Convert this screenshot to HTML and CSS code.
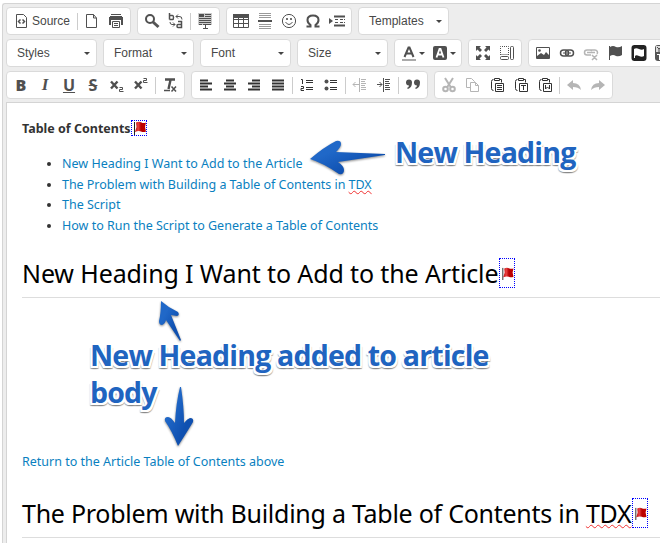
FILE: index.html
```html
<!DOCTYPE html>
<html lang="en">
<head>
<meta charset="utf-8">
<title>Article editor</title>
<link rel="stylesheet" href="styles.css">
</head>
<body>
<svg class="defs" aria-hidden="true">
  <defs>
    <linearGradient id="blue" x1="0" y1="0" x2="1" y2="1"><stop offset="0.3" stop-color="#2068c8"/><stop offset="0.7" stop-color="#0f50b0"/></linearGradient>
    <linearGradient id="red" x1="0" y1="0" x2="1" y2="0"><stop offset="0" stop-color="#c01010"/><stop offset="0.3" stop-color="#e84040"/><stop offset="0.55" stop-color="#b80000"/><stop offset="1" stop-color="#c00000"/></linearGradient>
    <symbol id="flag" viewBox="0 0 14 14"><path d="M2.500 1v13" stroke="#222" fill="none"/><path d="M4 1.500q3-1.500 5.500 0 2 1 4.500 0l-1 4.500 1 4.500q-2.500 1.200-5 0-2.500-1-6 .5l1.500-5z" fill="url(#red)"/></symbol>
  </defs>
</svg>
<div class="editor">
  <div class="toolbar">
    <div class="row">
      <div class="group">
        <span class="btn source"><svg class="ic" viewBox="0 0 16 16"><path d="M3.500 1.500h7l3 3v10h-10z" class="s"/><path d="M7.500 6.500L5.500 8.500l2 2M9.500 6.500l2 2-2 2" class="s w"/></svg>Source</span><i class="sep"></i>
        <span class="btn"><svg class="ic" viewBox="0 0 16 16"><path d="M2.500 1.500h7l3 3.500v9.500h-10zM9.500 1.500v3.500h3" class="s"/></svg></span>
        <span class="btn"><svg class="ic" viewBox="0 0 16 16"><path d="M3 1h10v1H3zM2 3h12v1h1v8h-2V7H3v5H1V4h1z" class="f"/><path d="M4.500 8.500h7v6h-7zM6 10.500h4M6 12.500h4" class="s"/></svg></span>
      </div>
      <div class="group">
        <span class="btn"><svg class="ic" viewBox="0 0 16 16"><circle cx="6" cy="6" r="4" class="s b"/><path d="M9 9l5.500 5" stroke="#555" stroke-width="3"/></svg></span>
        <span class="btn"><svg class="ic" viewBox="0 0 16 16"><path d="M1.500 0v6.500M1.500 2.500h3q1 0 1 2t-1 2h-3M10 8.500h3.500v6h-3.500q-1 0-1-1.500t1-1.500h3.500" class="s w"/><path d="M8 3.500h3q3-.5 3 3M8 3.500l2-2M8 3.500l2 2M2 9q0 2.500 2 2.500h3l-2-2M7 11.500l-2 2" class="s"/></svg></span><i class="sep"></i>
        <span class="btn"><svg class="ic" viewBox="0 0 16 16"><path d="M1 0h14v12H1z" fill="#ccc"/><path d="M2 1.500h5M2 3.500h5M8 1.500h6M8 3.500h6M2 5.500h12M2 7.500h12M2 9.500h12M2 11.500h3M11 11.500h3" class="s"/><path d="M2 1h5v3H2z" class="f"/><path d="M6 11.500h5M8.500 11.500v4M6 15.500h5" class="s"/></svg></span>
      </div>
      <div class="group">
        <span class="btn"><svg class="ic" viewBox="0 0 16 16"><path d="M.5 1.500h15v13H.5zM.5 6.500h15M.5 10.500h15M5.500 4v10M10.500 4v10" class="s"/><path d="M0 1h16v4H0z" class="f"/></svg></span>
        <span class="btn"><svg class="ic" viewBox="0 0 16 16"><path d="M2 .5h12M2 2.500h12M2 4.500h12M2 11.500h12M2 13.500h12M2 15.500h12" stroke="#999"/><path d="M1 7h14v2H1z" class="f"/></svg></span>
        <span class="btn"><svg class="ic" viewBox="0 0 16 16"><circle cx="8" cy="8" r="6.600" class="s"/><path d="M4.500 9q3.500 5 7 0" class="s"/><circle cx="6" cy="6" r="1.100" class="f"/><circle cx="10" cy="6" r="1.100" class="f"/></svg></span>
        <span class="btn"><svg class="ic" viewBox="0 0 16 16"><path d="M1.500 13.500h4v-1.500Q2.500 10 2.500 7Q2.500 2.500 8 2.500T13.500 7q0 3-3 5v1.500h4" class="s b"/></svg></span>
        <span class="btn"><svg class="ic" viewBox="0 0 16 16"><path d="M0 5l4 3-4 3z" class="f"/><path d="M5 3.500h11M5 12.500h11" class="s b"/><path d="M6 6.500h3m2 0h3m1 0h1M6 9.500h3m2 0h3m1 0h1" class="s"/></svg></span>
      </div>
      <div class="group"><span class="combo">Templates<i class="caret"></i></span></div>
    </div>
    <div class="row">
      <div class="group"><span class="combo">Styles<i class="caret"></i></span></div>
      <div class="group"><span class="combo">Format<i class="caret"></i></span></div>
      <div class="group"><span class="combo">Font<i class="caret"></i></span></div>
      <div class="group"><span class="combo">Size<i class="caret"></i></span></div>
      <div class="group">
        <span class="btn color"><svg class="ic" viewBox="0 0 16 16"><path d="M3.500 12L7.500 2.500h1L12.500 12M5 8.500h6" class="s b"/><path d="M1 14h14v2H1z" fill="#aaa"/></svg><i class="caret"></i></span>
        <span class="btn color"><svg class="ic" viewBox="0 0 16 16"><rect x="1" y="1" width="14" height="14" rx="2" class="f"/><path d="M4.500 12.500L7.500 4h1l3 8.500M6 9.500h4" stroke="#fff" stroke-width="1.800" fill="none"/></svg><i class="caret"></i></span>
      </div>
      <div class="group">
        <span class="btn"><svg class="ic" viewBox="0 0 16 16"><path d="M1 1h5L4.500 2.500l2.500 2.500-2 2-2.500-2.500L1 6zM15 1v5l-1.500-1.500L11 7 9 5l2.500-2.500L10 1zM1 15v-5l1.500 1.500L5 9l2 2-2.500 2.500L6 15zM15 15h-5l1.500-1.500L9 11l2-2 2.500 2.500L15 10z" class="f"/></svg></span>
        <span class="btn"><svg class="ic" viewBox="0 0 16 16"><path d="M1.500 10V1.500h8V11M1.500 9.500h8" class="s" stroke-dasharray="1 1"/><rect x="11.500" y="1.500" width="3" height="13" rx="1" class="s"/><rect x="1.500" y="11.500" width="8" height="3" rx="1" class="s"/></svg></span>
      </div>
      <div class="group long">
        <span class="btn"><svg class="ic" viewBox="0 0 16 16"><path d="M1.500 2.500h13v11h-13z" class="s"/><path d="M2 11l4-3 3 2 2-3 3 3v3H2z" class="f"/><circle cx="4.500" cy="5.500" r="1.300" class="f"/></svg></span>
        <span class="btn"><svg class="ic" viewBox="0 0 16 16"><rect x="1.500" y="5" width="8" height="6" rx="3" class="s w"/><rect x="6.500" y="5" width="8" height="6" rx="3" class="s w"/><path d="M4 8h8" class="s"/></svg></span>
        <span class="btn dim"><svg class="ic" viewBox="0 0 16 16"><path d="M8 10H4a2.500 2.500 0 010-5h3a2.500 2.500 0 012 1M7 5h5a2.500 2.500 0 012 4M4 7.500h8M9 10l5 5M14 10l-5 5" class="s w"/></svg></span>
        <span class="btn"><svg class="ic" viewBox="0 0 16 16"><path d="M2.500 1v14" class="s"/><path d="M3 2q3-2 6 0 3 1 6-1v9q-3 2-6 1-3-2-6 0z" class="f"/></svg></span>
        <span class="btn"><svg class="ic" viewBox="0 0 16 16"><rect x=".5" y="0" width="15" height="16" rx="3" fill="#222"/><path d="M3 13V4q2-1.500 5 0t5 0v7q-2 1.500-5 0t-4 0v2z" fill="#fff"/></svg></span>
        <span class="btn"><svg class="ic" viewBox="0 0 16 16"><rect x="0" y="0" width="16" height="16" rx="3" fill="#555"/><path d="M1 1h14v6H1z" fill="#ddd"/><path d="M2 2l2 2v3M6 2L4 4" class="s"/><path d="M2 9.500h5M4.500 10v5" stroke="#fff"/></svg></span>
      </div>
    </div>
    <div class="row">
      <div class="group">
        <span class="btn ch"><b>B</b></span><span class="btn ch serif"><b><em>I</em></b></span><span class="btn ch"><u>U</u></span><span class="btn ch"><s>S</s></span>
        <span class="btn"><svg class="ic" viewBox="0 0 16 16"><path d="M2 4.500l6.500 7M8.500 4.500l-6.500 7" class="s x"/><path d="M10.500 10.500h3v2h-3v2h4" class="s"/></svg></span>
        <span class="btn"><svg class="ic" viewBox="0 0 16 16"><path d="M2 4.500l6.500 7M8.500 4.500l-6.500 7" class="s x"/><path d="M10.500 1.500h3v2h-3v2h4" class="s"/></svg></span><i class="sep"></i>
        <span class="btn"><svg class="ic" viewBox="0 0 16 16"><path d="M3 2.500h10M8.500 3L6.500 12" class="s x"/><path d="M2 13.500h6M9.500 9.500l4.500 5M14 9.500l-4.500 5" class="s w"/></svg></span>
      </div>
      <div class="group">
        <span class="btn"><svg class="ic" viewBox="0 0 16 16"><path d="M2 3.500h8M2 6.500h12M2 9.500h8M2 12.500h12" class="d b"/></svg></span>
        <span class="btn"><svg class="ic" viewBox="0 0 16 16"><path d="M4 3.500h8M2 6.500h12M4 9.500h8M2 12.500h12" class="d b"/></svg></span>
        <span class="btn"><svg class="ic" viewBox="0 0 16 16"><path d="M6 3.500h8M2 6.500h12M6 9.500h8M2 12.500h12" class="d b"/></svg></span>
        <span class="btn"><svg class="ic" viewBox="0 0 16 16"><path d="M2 3.500h12M2 6.500h12M2 9.500h12M2 12.500h12" class="d b"/></svg></span><i class="sep"></i>
        <span class="btn"><svg class="ic" viewBox="0 0 16 16"><path d="M2 2.500h1.500V7M2 9.500h2.500v2H2v2h3M7 3.500h7M7 5.500h7M7 10.500h7M7 12.500h7" class="d"/></svg></span>
        <span class="btn"><svg class="ic" viewBox="0 0 16 16"><circle cx="3.500" cy="4.500" r="2" class="f"/><circle cx="3.500" cy="11.500" r="2" class="f"/><path d="M7 3.500h7M7 5.500h7M7 10.500h7M7 12.500h7" class="d"/></svg></span><i class="sep"></i>
        <span class="btn dim"><svg class="ic" viewBox="0 0 16 16"><path d="M7.500 1v14M9 2.500h5M9 4.500h4M9 6.500h5M9 8.500h4M9 10.500h5M9 12.500h5M1 7.500h6M3.500 5L1 7.500 3.500 10" class="s"/></svg></span>
        <span class="btn"><svg class="ic" viewBox="0 0 16 16"><path d="M7.500 1v14M9 2.500h5M9 4.500h4M9 6.500h5M9 8.500h4M9 10.500h5M9 12.500h5M1 7.500h5M3.500 5L6 7.500 3.500 10" class="s"/></svg></span><i class="sep"></i>
        <span class="btn"><svg class="ic" viewBox="0 0 16 16"><path d="M1 5.500a3 3 0 116 0q0 5-4 6.500l-1-1q2-1 2-2.500Q1 8.500 1 5.500zM9 5.500a3 3 0 116 0q0 5-4 6.500l-1-1q2-1 2-2.500Q9 8.500 9 5.500z" class="f"/></svg></span>
      </div>
      <div class="group">
        <span class="btn dim"><svg class="ic" viewBox="0 0 16 16"><path d="M4 1l6 9.500M12 1l-6 9.500" class="s b"/><circle cx="4.500" cy="12" r="2.300" class="s b"/><circle cx="11.500" cy="12" r="2.300" class="s b"/></svg></span>
        <span class="btn dim"><svg class="ic" viewBox="0 0 16 16"><path d="M5.500 10.500h-4v-9h5l3 3v1M5.500 5.500h5l3 3v6h-8zM10.500 5.500v3h3" class="s"/></svg></span>
        <span class="btn"><svg class="ic" viewBox="0 0 16 16"><path d="M4.500 2.500q-2 0-2 2v7q0 2 2 2M11 2.500h1.500v3M5.500 1.500h5v2h-5zM6.500 6.500h8v8h-8zM8 8.500h5M8 10.500h5M8 12.500h5" class="d"/></svg></span>
        <span class="btn"><svg class="ic" viewBox="0 0 16 16"><path d="M4.500 2.500q-2 0-2 2v7q0 2 2 2M11 2.500h1.500v3M5.500 1.500h5v2h-5zM6.500 6.500h8v8h-8zM8 8.500h5M10.500 8v5" class="d"/></svg></span>
        <span class="btn"><svg class="ic" viewBox="0 0 16 16"><path d="M4.500 2.500q-2 0-2 2v7q0 2 2 2M11 2.500h1.500v3M5.500 1.500h5v2h-5zM6.500 6.500h8v8h-8zM8.500 8v4l2-2 2 2V8" class="d"/></svg></span><i class="sep"></i>
        <span class="btn dim"><svg class="ic" viewBox="0 0 16 16"><path d="M1 8l6-5v3q7 0 8 7-3-3-8-3v3z" class="f"/></svg></span>
        <span class="btn dim"><svg class="ic" viewBox="0 0 16 16"><path d="M15 8L9 3v3q-7 0-8 7 3-3 8-3v3z" class="f"/></svg></span>
      </div>
    </div>
  </div>
  <div class="content">
    <p class="toc"><b>Table of Contents</b><span class="anchor"><svg><use href="#flag"/></svg></span></p>
    <ul>
      <li><a>New Heading I Want to Add to the Article</a></li>
      <li><a class="tight">The Problem with Building a Table of Contents in <span class="sp">TDX</span></a></li>
      <li><a>The Script</a></li>
      <li><a>How to Run the Script to Generate a Table of Contents</a></li>
    </ul>
    <h1><span class="h-a">New Heading I Want to Add to the Article</span><span class="anchor tall"><svg><use href="#flag"/></svg></span></h1>
    <p class="back"><a>Return to the Article Table of Contents above</a></p>
    <h1><span class="h-b">The Problem with Building a Table of Contents in <span class="sp">TDX</span></span><span class="anchor tall"><svg><use href="#flag"/></svg></span></h1>
  </div>
</div>
<svg class="arrow a1" viewBox="0 0 76 34"><path d="M0 18Q14 6 26 0q5-1 5 3 0 3-5 8l49 2v1L28 21q6 4 6 8 0 5-5 4Q13 22 0 18z" fill="url(#blue)"/></svg>
<svg class="arrow a2" viewBox="0 0 24 42"><path d="M3 0q8 7 17 11 2 3-1 4l-6-1 10 25-1 1L8 19q-1 4-4 5-3 0-3-4Q3 12 3 0z" fill="url(#blue)"/></svg>
<svg class="arrow a3" viewBox="0 0 28 60"><path d="M15 0h1q3 20 3 36 3-4 6-5 4 0 3 4Q22 45 13 59 7 44 0 34q-1-4 3-4 3 0 7 6 1-20 5-36z" fill="url(#blue)"/></svg>
<div class="note n1">New Heading</div>
<div class="note n2">New Heading added to article<br>body</div>
</body>
</html>
```
FILE: styles.css
```css
* { box-sizing: border-box; }
body { margin: 0; width: 660px; height: 543px; overflow: hidden; position: relative; background: #fff; }
.defs { position: absolute; width: 0; height: 0; }
.editor { margin: 3px 0 0 2px; width: 658px; height: 540px; overflow: hidden; border: 1px solid #d4d4d4; border-width: 1px 0 0 1px; border-radius: 3px 0 0 0; background: #ededed; padding: 3px 0 0 3px; }
.toolbar { display: flex; flex-direction: column; gap: 4px; height: 95px; }
.row { display: flex; gap: 6px; height: 28px; }
.group { display: flex; flex: none; height: 28px; padding: 0 2px; background: #fff; border: 1px solid #dadada; border-radius: 4px; align-items: center; }
.btn { width: 24px; height: 26px; display: flex; align-items: center; justify-content: center; flex: none; }
.ic { width: 16px; height: 16px; flex: none; display: block; }
.source { width: 66px; justify-content: flex-start; gap: 3px; padding-left: 4px; font: 12px "Liberation Sans", sans-serif; color: #484848; }
.sep { width: 1px; height: 17px; margin: 0 2px; background: #ccc; }
.combo { width: 85px; padding: 0 4px 0 8px; display: flex; justify-content: space-between; align-items: center; font: 12px "Liberation Sans", sans-serif; color: #484848; }
.caret { border: 3px solid transparent; border-top-color: #444; border-bottom: 0; }
.color { width: 31px; gap: 2px; }
.long { width: 146px; overflow: hidden; }
.s { stroke: #505050; fill: none; }
.d { stroke: #333; fill: none; }
.f { fill: #505050; }
.w { stroke-width: 1.5; }
.b { stroke-width: 2; }
.x { stroke-width: 2.4; }
.dim { opacity: .42; }
.ch { font: bold 16px "Open Sans", sans-serif; color: #505050; }
.serif { font-family: "Liberation Serif", serif; font-size: 17px; }
.content { width: 680px; height: 460px; background: #fff; border: 1px solid #d4d4d4; padding: 15px 15px 0; font: 12.5px "Noto Sans", sans-serif; color: #333; }
p { margin: 0; height: 20px; line-height: 21px; white-space: nowrap; }
.toc { display: flex; align-items: center; }
.toc b { width: 109px; }
.anchor { width: 16px; height: 16px; border: 1px dotted #00f; display: flex; align-items: center; flex: none; }
.anchor svg { width: 14px; height: 14px; }
ul { margin: 16px 0 16px; padding: 0 0 0 40px; height: 83px; white-space: nowrap; }
li { height: 20.7px; line-height: 20.7px; }
a { color: #0a7fc0; }
.tight { letter-spacing: -0.035px; }
.sp { text-decoration: underline wavy #f03030 1px; text-underline-offset: 1px; text-decoration-skip-ink: none; }
h1 { margin: 0; height: 45px; border-bottom: 1px solid #ddd; display: flex; align-items: center; padding-bottom: 4px; font: 25px/40px "Noto Sans", sans-serif; font-weight: 400; letter-spacing: -0.12px; color: #000; white-space: nowrap; }
.h-a { width: 477px; }
.h-b { width: 610px; letter-spacing: -0.26px; }
.tall { height: 30px; }
.tall svg { width: 14px; height: 13px; }
.back { margin: 153px 0 22px; }
.arrow { position: absolute; overflow: visible; filter: drop-shadow(0 1px 1px #888); }
.a1 { left: 310px; top: 141px; width: 76px; height: 34px; }
.a2 { left: 158px; top: 301px; width: 24px; height: 42px; }
.a3 { left: 165px; top: 387px; width: 28px; height: 60px; }
.note { position: absolute; font: bold 28.5px/37px "Open Sans", sans-serif; letter-spacing: -0.8px; color: #2064c0; white-space: nowrap; text-shadow: 2px 0 #fff, -2px 0 #fff, 0 2px #fff, 2px 2px #fff, -2px 2px #fff, 0 3px 1px #888, 2px 3px 1px #999, -2px 3px 1px #999; }
.n1 { left: 395px; top: 134px; }
.n2 { left: 90px; top: 337px; }
```
